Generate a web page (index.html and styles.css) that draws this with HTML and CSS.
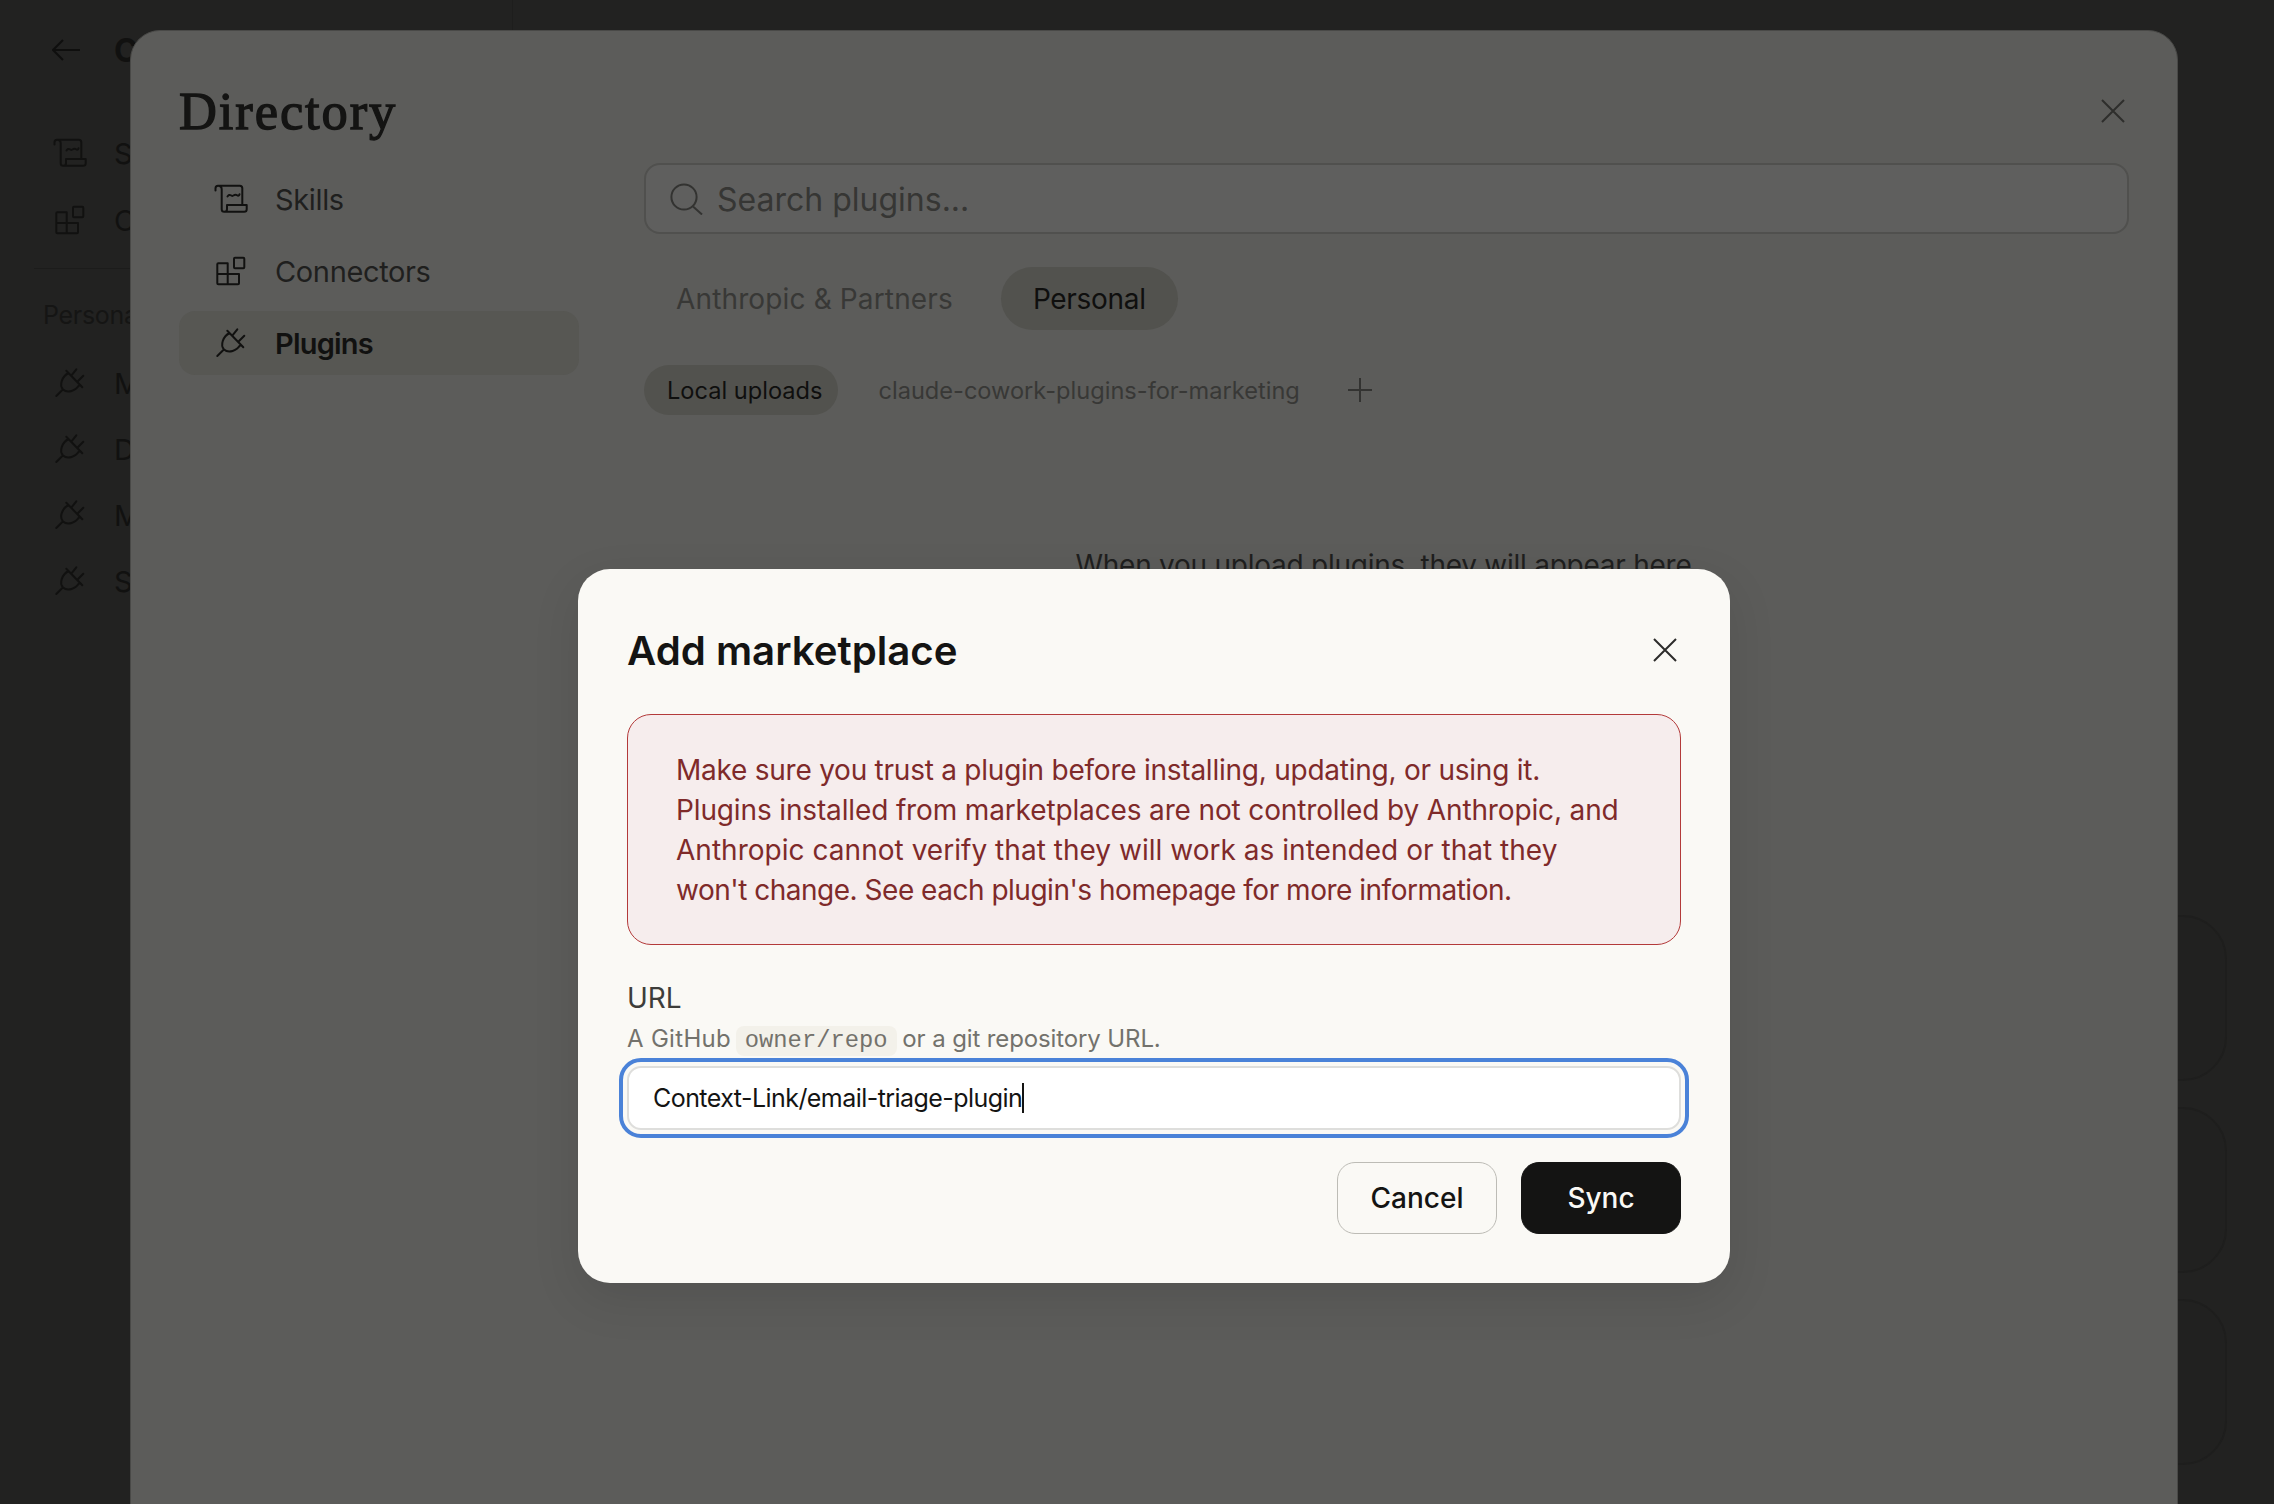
FILE: index.html
```html
<!DOCTYPE html>
<html lang="en">
<head>
<meta charset="utf-8">
<title>Add marketplace</title>
<link rel="stylesheet" href="styles.css">
</head>
<body>
<svg class="defs" width="0" height="0" aria-hidden="true">
  <symbol id="i-scroll" viewBox="0 0 36 32">
    <path d="M2.5 7.5V5.2Q2.5 2.7 5 2.7H26.8Q29.3 2.7 29.3 5.2V22M5 2.7Q8.7 2.7 8.7 6.2V26.2Q8.7 28.7 11.2 28.7H31.2Q33.7 28.7 33.7 26.2V22H14V26.2Q14 28.7 11.2 28.7M14.5 13.5q1.6-2.4 3.2-1.2t3.2 0t3.2 0t2.4-1"/>
  </symbol>
  <symbol id="i-conn" viewBox="0 0 36 32">
    <path d="M4.3 9.3Q4.3 8.3 5.3 8.3H14.7V19H26V28.3Q26 29.3 25 29.3H5.3Q4.3 29.3 4.3 28.3ZM4.3 19H14.7V29.3M22 2.7H30.3Q31.3 2.7 31.3 3.7V12.3Q31.3 13.3 30.3 13.3H22Q21 13.3 21 12.3V3.7Q21 2.7 22 2.7Z"/>
  </symbol>
  <symbol id="i-plug" viewBox="0 0 36 32">
    <path d="M4.3 29L10.6 22.8M14.3 3.7L30.3 20.3M19.3 8.7L24.3 2.3M25.3 14.7L31.3 8.7M16.5 6C10 9.5 7 18 11 22.5C15.5 26.5 24 24 27.5 17.5"/>
  </symbol>
</svg>

<div class="app">
  <aside class="side">
    <div class="side-head">
      <svg class="arrow" viewBox="0 0 28 22"><path d="M28 11H1M11 1L1 11L11 21"/></svg>
      <strong>Customize</strong>
    </div>
    <ul class="side-list">
      <li class="side-item"><svg class="ico"><use href="#i-scroll"/></svg>Skills</li>
      <li class="side-item"><svg class="ico"><use href="#i-conn"/></svg>Connectors</li>
    </ul>
    <hr class="side-rule">
    <div class="side-cap">Personal plugins</div>
    <ul class="side-list side-plugins">
      <li class="side-item"><svg class="ico"><use href="#i-plug"/></svg>Marketing</li>
      <li class="side-item"><svg class="ico"><use href="#i-plug"/></svg>Data</li>
      <li class="side-item"><svg class="ico"><use href="#i-plug"/></svg>Meetings</li>
      <li class="side-item"><svg class="ico"><use href="#i-plug"/></svg>Sales</li>
    </ul>
  </aside>
  <main class="back">
    <div class="back-card"></div>
    <div class="back-card"></div>
    <div class="back-card"></div>
  </main>
</div>

<section class="panel">
  <header class="panel-head">
    <h1 class="panel-title">Directory</h1>
    <svg class="x-ico panel-x" viewBox="0 0 24 24"><path d="M1 1L23 23M23 1L1 23"/></svg>
  </header>
  <div class="panel-body">
    <nav class="nav">
      <a class="nav-row"><svg class="ico"><use href="#i-scroll"/></svg>Skills</a>
      <a class="nav-row"><svg class="ico"><use href="#i-conn"/></svg>Connectors</a>
      <a class="nav-row nav-on"><svg class="ico"><use href="#i-plug"/></svg>Plugins</a>
    </nav>
    <div class="content">
      <div class="search">
        <svg class="search-ico" viewBox="0 0 33 32"><circle cx="14" cy="14" r="12.6"/><path d="M23 23.5L32 31.5"/></svg>
        <span class="search-text">Search plugins...</span>
      </div>
      <div class="tabs">
        <span class="tab">Anthropic &amp; Partners</span>
        <span class="tab tab-on">Personal</span>
      </div>
      <div class="subtabs">
        <span class="sub sub-on">Local uploads</span>
        <span class="sub">claude-cowork-plugins-for-marketing</span>
        <svg class="plus" viewBox="0 0 24 24"><path d="M12 0V24M0 12H24"/></svg>
      </div>
      <p class="empty">When you upload plugins, they will appear here</p>
    </div>
  </div>
</section>

<section class="modal">
  <header class="modal-head">
    <h2 class="modal-title">Add marketplace</h2>
    <svg class="x-ico modal-x" viewBox="0 0 24 24"><path d="M1 1L23 23M23 1L1 23"/></svg>
  </header>
  <div class="warn">
    <span class="warn-line warn-a">Make sure you trust a plugin before installing, updating, or using it.</span>
    <span class="warn-line warn-b">Plugins installed from marketplaces are not controlled by Anthropic, and</span>
    <span class="warn-line warn-c">Anthropic cannot verify that they will work as intended or that they</span>
    <span class="warn-line warn-d">won't change. See each plugin's homepage for more information.</span>
  </div>
  <div class="field-label">URL</div>
  <div class="field-help"><span class="help-lead">A GitHub</span> <code class="chip">owner/repo</code> <span class="help-tail">or a git repository URL.</span></div>
  <div class="input"><span>Context-Link/email-triage-plugin</span><i class="caret"></i></div>
  <div class="actions">
    <button class="btn">Cancel</button>
    <button class="btn btn-dark">Sync</button>
  </div>
</section>
</body>
</html>
```

FILE: styles.css
```css
* { box-sizing: border-box; }
html, body { margin: 0; height: 100%; }
body {
  position: relative;
  width: 2274px;
  height: 1504px;
  overflow: hidden;
  background: #222221;
  font-family: "Inter", "Liberation Sans", sans-serif;
  color: #141413;
}
.defs { position: absolute; }
.ico {
  width: 36px;
  height: 32px;
  flex: none;
  fill: none;
  stroke: #111110;
  stroke-width: 2;
  stroke-linejoin: round;
  stroke-linecap: round;
}
.x-ico {
  fill: none;
  stroke-width: 2;
  stroke: currentColor;
}

.app { display: flex; height: 100%; }
.side { width: 512px; flex: none; padding: 39px 34px 0 0; color: #111110; }
.side-head { display: flex; align-items: center; gap: 34px; padding-left: 52px; height: 22px; font-size: 32px; }
.arrow { width: 28px; height: 22px; fill: none; stroke: #0f0f0e; stroke-width: 2; }
.side-list { list-style: none; margin: 76px 0 0; padding: 0 0 0 52px; display: flex; flex-direction: column; gap: 35px; }
.side-item { display: flex; align-items: center; gap: 26px; height: 32px; font-size: 29px; }
.side-rule { border: 0; border-top: 1px solid #1c1c1b; margin: 32px 0 0 34px; }
.side-cap { margin: 30px 0 0 43px; font-size: 25px; letter-spacing: -0.3px; color: #151514; height: 32px; line-height: 32px; white-space: nowrap; }
.side-plugins { margin-top: 36px; gap: 34px; }
.back { flex: 1; border-left: 1px solid #1e1e1d; padding: 915px 47px 0 0; display: flex; flex-direction: column; gap: 26px; align-items: flex-end; }
.back-card { width: 900px; height: 166px; border: 2px solid #1e1e1d; border-radius: 44px; background: #212120; flex: none; }

.panel {
  position: absolute;
  left: 130px;
  top: 30px;
  width: 2048px;
  height: 1520px;
  border: 1px solid #494947;
  border-radius: 30px;
  background: #5c5c5a;
  padding: 0 48px;
}
.panel-head { display: flex; align-items: center; justify-content: space-between; height: 132px; padding-top: 28px; }
.panel-title {
  margin: 0;
  font-family: "Liberation Serif", serif;
  font-size: 52.5px;
  font-weight: 400;
  letter-spacing: 1.9px;
  -webkit-text-stroke: 1.3px #141413;
  color: #141413;
}
.panel-x { width: 24px; height: 24px; color: #2e2e2c; margin-right: 4px; }
.panel-body { display: grid; grid-template-columns: 400px 1485px; column-gap: 65px; }
.nav { display: flex; flex-direction: column; gap: 8px; padding-top: 4px; }
.nav-row { display: flex; align-items: center; gap: 26px; height: 64px; padding-left: 34px; border-radius: 16px; font-size: 29px; letter-spacing: -0.36px; color: #1f1f1e; }
.nav-on { background: #575753; font-weight: 600; letter-spacing: -0.8px; color: #111110; }
.content { display: flex; flex-direction: column; }
.search {
  display: flex;
  align-items: center;
  gap: 14px;
  height: 71px;
  padding-left: 24px;
  border: 2px solid #50504e;
  border-radius: 16px;
  background: #5f5f5e;
  font-size: 32px;
  color: #363634;
}
.search-text { padding-top: 2px; }
.search-ico { width: 33px; height: 32px; fill: none; stroke: #333331; stroke-width: 2; }
.tabs { display: flex; gap: 16px; margin-top: 33px; }
.tab { display: flex; align-items: center; height: 63px; padding: 0 32px; border-radius: 32px; font-size: 28px; letter-spacing: 0.14px; color: #383836; }
.tab-on { background: #52524e; letter-spacing: -0.3px; color: #0f0f0e; }
.subtabs { display: flex; align-items: center; gap: 16px; margin-top: 35px; }
.sub { display: flex; align-items: center; height: 50px; padding: 0 24px; border-radius: 25px; font-size: 23.6px; color: #383836; }
.sub-on { background: #52524e; padding: 0 16px 0 23px; color: #0f0f0e; }
.plus { width: 24px; height: 24px; margin-left: 8px; fill: none; stroke: #333331; stroke-width: 2; }
.empty { margin: 132px 0 0; padding-right: 6px; text-align: center; font-size: 28px; line-height: 36px; letter-spacing: -0.25px; color: #1f1f1e; }

.modal {
  position: absolute;
  left: 578px;
  top: 569px;
  width: 1152px;
  height: 714px;
  padding: 0 49px;
  background: #faf9f5;
  border-radius: 32px;
  box-shadow: 0 16px 48px rgba(0, 0, 0, 0.1);
}
.modal-head { display: flex; align-items: center; justify-content: space-between; height: 145px; padding-top: 17px; }
.modal-title { margin: 0; font-size: 40.2px; font-weight: 600; color: #141413; }
.modal-x { width: 24px; height: 24px; color: #2c2c2a; margin-right: 4px; }
.warn {
  height: 231px;
  padding: 35px 48px;
  border: 1px solid #b33a3a;
  border-radius: 24px;
  background: #f6eded;
  color: #7f2a2a;
  font-size: 28px;
  line-height: 40px;
  white-space: nowrap;
}
.warn-line { display: block; }
.warn-a { letter-spacing: -0.24px; }
.warn-b { letter-spacing: -0.14px; }
.warn-c { letter-spacing: 0.03px; }
.warn-d { letter-spacing: -0.49px; }
.field-label { margin-top: 35px; height: 36px; line-height: 36px; font-size: 28px; color: #3d3d3a; }
.field-help { margin-top: 5px; height: 36px; line-height: 36px; font-size: 24px; color: #73726c; white-space: nowrap; }
.help-lead { letter-spacing: 0.3px; }
.help-tail { letter-spacing: -0.12px; }
.chip { display: inline-block; height: 30px; line-height: 30px; padding: 0 9px; margin: 0 -1px 0 -2px; border-radius: 8px; background: #f3f1ea; font-family: "Liberation Mono", monospace; font-size: 23.8px; }
.input {
  display: flex;
  align-items: center;
  height: 64px;
  margin-top: 9px;
  padding-left: 24px;
  border: 2px solid #dededc;
  border-radius: 14px;
  background: #fff;
  outline: 4px solid #4a82d8;
  outline-offset: 4px;
  font-size: 25px;
  letter-spacing: -0.55px;
  color: #141413;
}
.caret { width: 2px; height: 30px; background: #141413; }
.actions { display: flex; justify-content: flex-end; gap: 24px; margin-top: 32px; }
.btn {
  width: 160px;
  height: 72px;
  border: 1px solid #bdbcb6;
  border-radius: 18px;
  background: transparent;
  font: inherit;
  font-size: 28px;
  font-weight: 500;
  color: #141413;
}
.btn-dark { background: #141413; border-color: #141413; color: #faf9f5; }
```
